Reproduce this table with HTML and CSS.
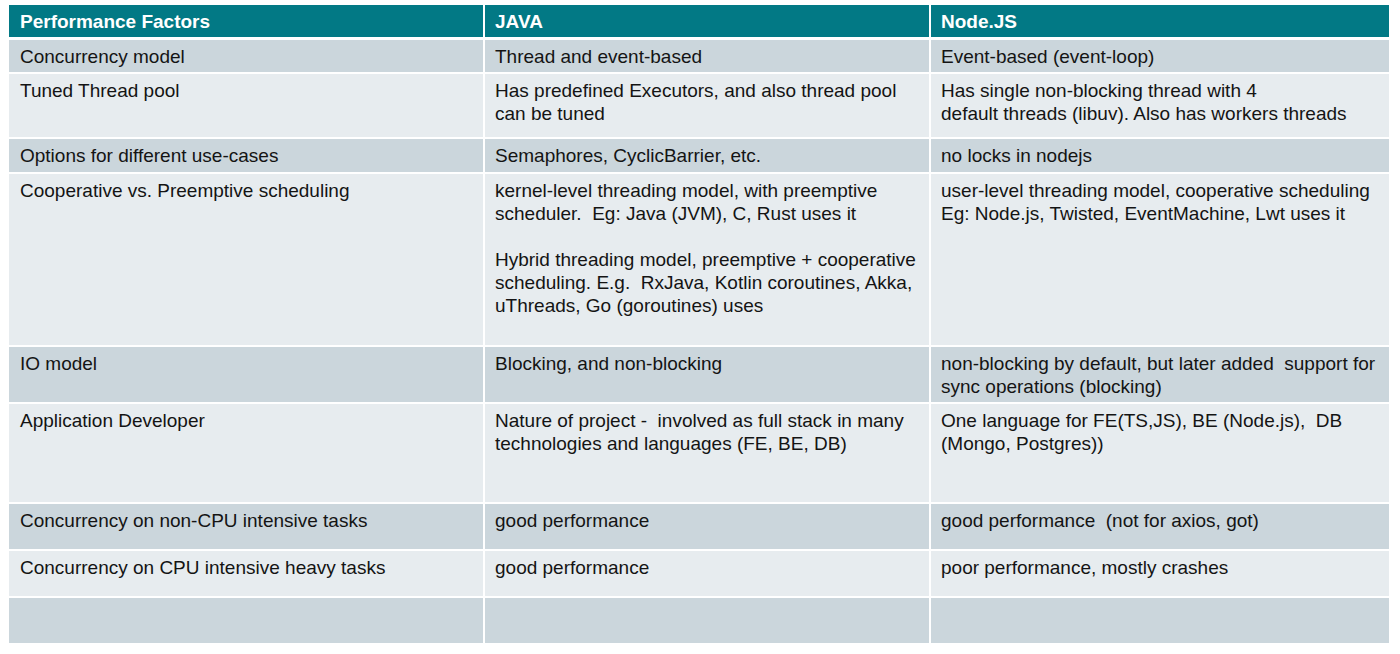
FILE: index.html
```html
<!DOCTYPE html>
<html lang="en">
<head>
<meta charset="utf-8">
<title>Java vs Node.JS performance factors</title>
<link rel="stylesheet" href="styles.css">
</head>
<body>
<table class="cmp">
  <colgroup>
    <col class="c1">
    <col class="c2">
    <col class="c3">
  </colgroup>
  <thead>
    <tr class="head">
      <th>Performance Factors</th>
      <th>JAVA</th>
      <th>Node.JS</th>
    </tr>
  </thead>
  <tbody>
    <tr class="dark r32">
      <td>Concurrency model</td>
      <td>Thread and event-based</td>
      <td>Event-based (event-loop)</td>
    </tr>
    <tr class="light r63">
      <td>Tuned Thread pool</td>
      <td>Has predefined Executors, and also thread pool<br>can be tuned</td>
      <td>Has single non-blocking thread with 4<br>default threads (libuv). Also has workers threads</td>
    </tr>
    <tr class="dark r33">
      <td>Options for different use-cases</td>
      <td>Semaphores, CyclicBarrier, etc.</td>
      <td>no locks in nodejs</td>
    </tr>
    <tr class="light r171">
      <td>Cooperative vs. Preemptive scheduling</td>
      <td>kernel-level threading model, with preemptive<br>scheduler.&nbsp; Eg: Java (JVM), C, Rust uses it<br><br>Hybrid threading model, preemptive + cooperative<br>scheduling. E.g.&nbsp; RxJava, Kotlin coroutines, Akka,<br>uThreads, Go (goroutines) uses</td>
      <td>user-level threading model, cooperative scheduling<br>Eg: Node.js, Twisted, EventMachine, Lwt uses it</td>
    </tr>
    <tr class="dark r55">
      <td>IO model</td>
      <td>Blocking, and non-blocking</td>
      <td>non-blocking by default, but later added&nbsp; support for<br>sync operations (blocking)</td>
    </tr>
    <tr class="light r98">
      <td>Application Developer</td>
      <td>Nature of project -&nbsp; involved as full stack in many<br>technologies and languages (FE, BE, DB)</td>
      <td>One language for FE(TS,JS), BE (Node.js),&nbsp; DB<br>(Mongo, Postgres))</td>
    </tr>
    <tr class="dark r45">
      <td>Concurrency on non-CPU intensive tasks</td>
      <td>good performance</td>
      <td>good performance&nbsp; (not for axios, got)</td>
    </tr>
    <tr class="light r45">
      <td>Concurrency on CPU intensive heavy tasks</td>
      <td>good performance</td>
      <td>poor performance, mostly crashes</td>
    </tr>
    <tr class="dark r45">
      <td></td>
      <td></td>
      <td></td>
    </tr>
  </tbody>
</table>
</body>
</html>
```
FILE: styles.css
```css
* {
  box-sizing: border-box;
}

html, body {
  margin: 0;
  padding: 0;
  background: #ffffff;
}

body {
  padding: 3px 0 0 7px;
  font-family: "Liberation Sans", Arial, sans-serif;
  font-size: 19px;
  line-height: 23px;
  color: #141414;
}

.cmp {
  border-collapse: separate;
  border-spacing: 2px;
  table-layout: fixed;
  width: 1384px;
}

.c1 { width: 474px; }
.c2 { width: 444px; }
.c3 { width: 458px; }

.cmp th,
.cmp td {
  vertical-align: top;
  text-align: left;
  padding: 5px 0 0 11px;
  white-space: nowrap;
  overflow: hidden;
}

.cmp td + td,
.cmp th + th {
  padding-left: 10px;
}

.head th {
  background: #027985;
  color: #ffffff;
  font-weight: bold;
  border-bottom: 1px solid #ffffff;
}

.head { height: 33px; }

.dark td { background: #cbd6dc; }
.light td { background: #e7ecef; }

.r32 { height: 32px; }
.r33 { height: 33px; }
.r45 { height: 45px; }
.r55 { height: 55px; }
.r63 { height: 63px; }
.r98 { height: 98px; }
.r171 { height: 171px; }
```
